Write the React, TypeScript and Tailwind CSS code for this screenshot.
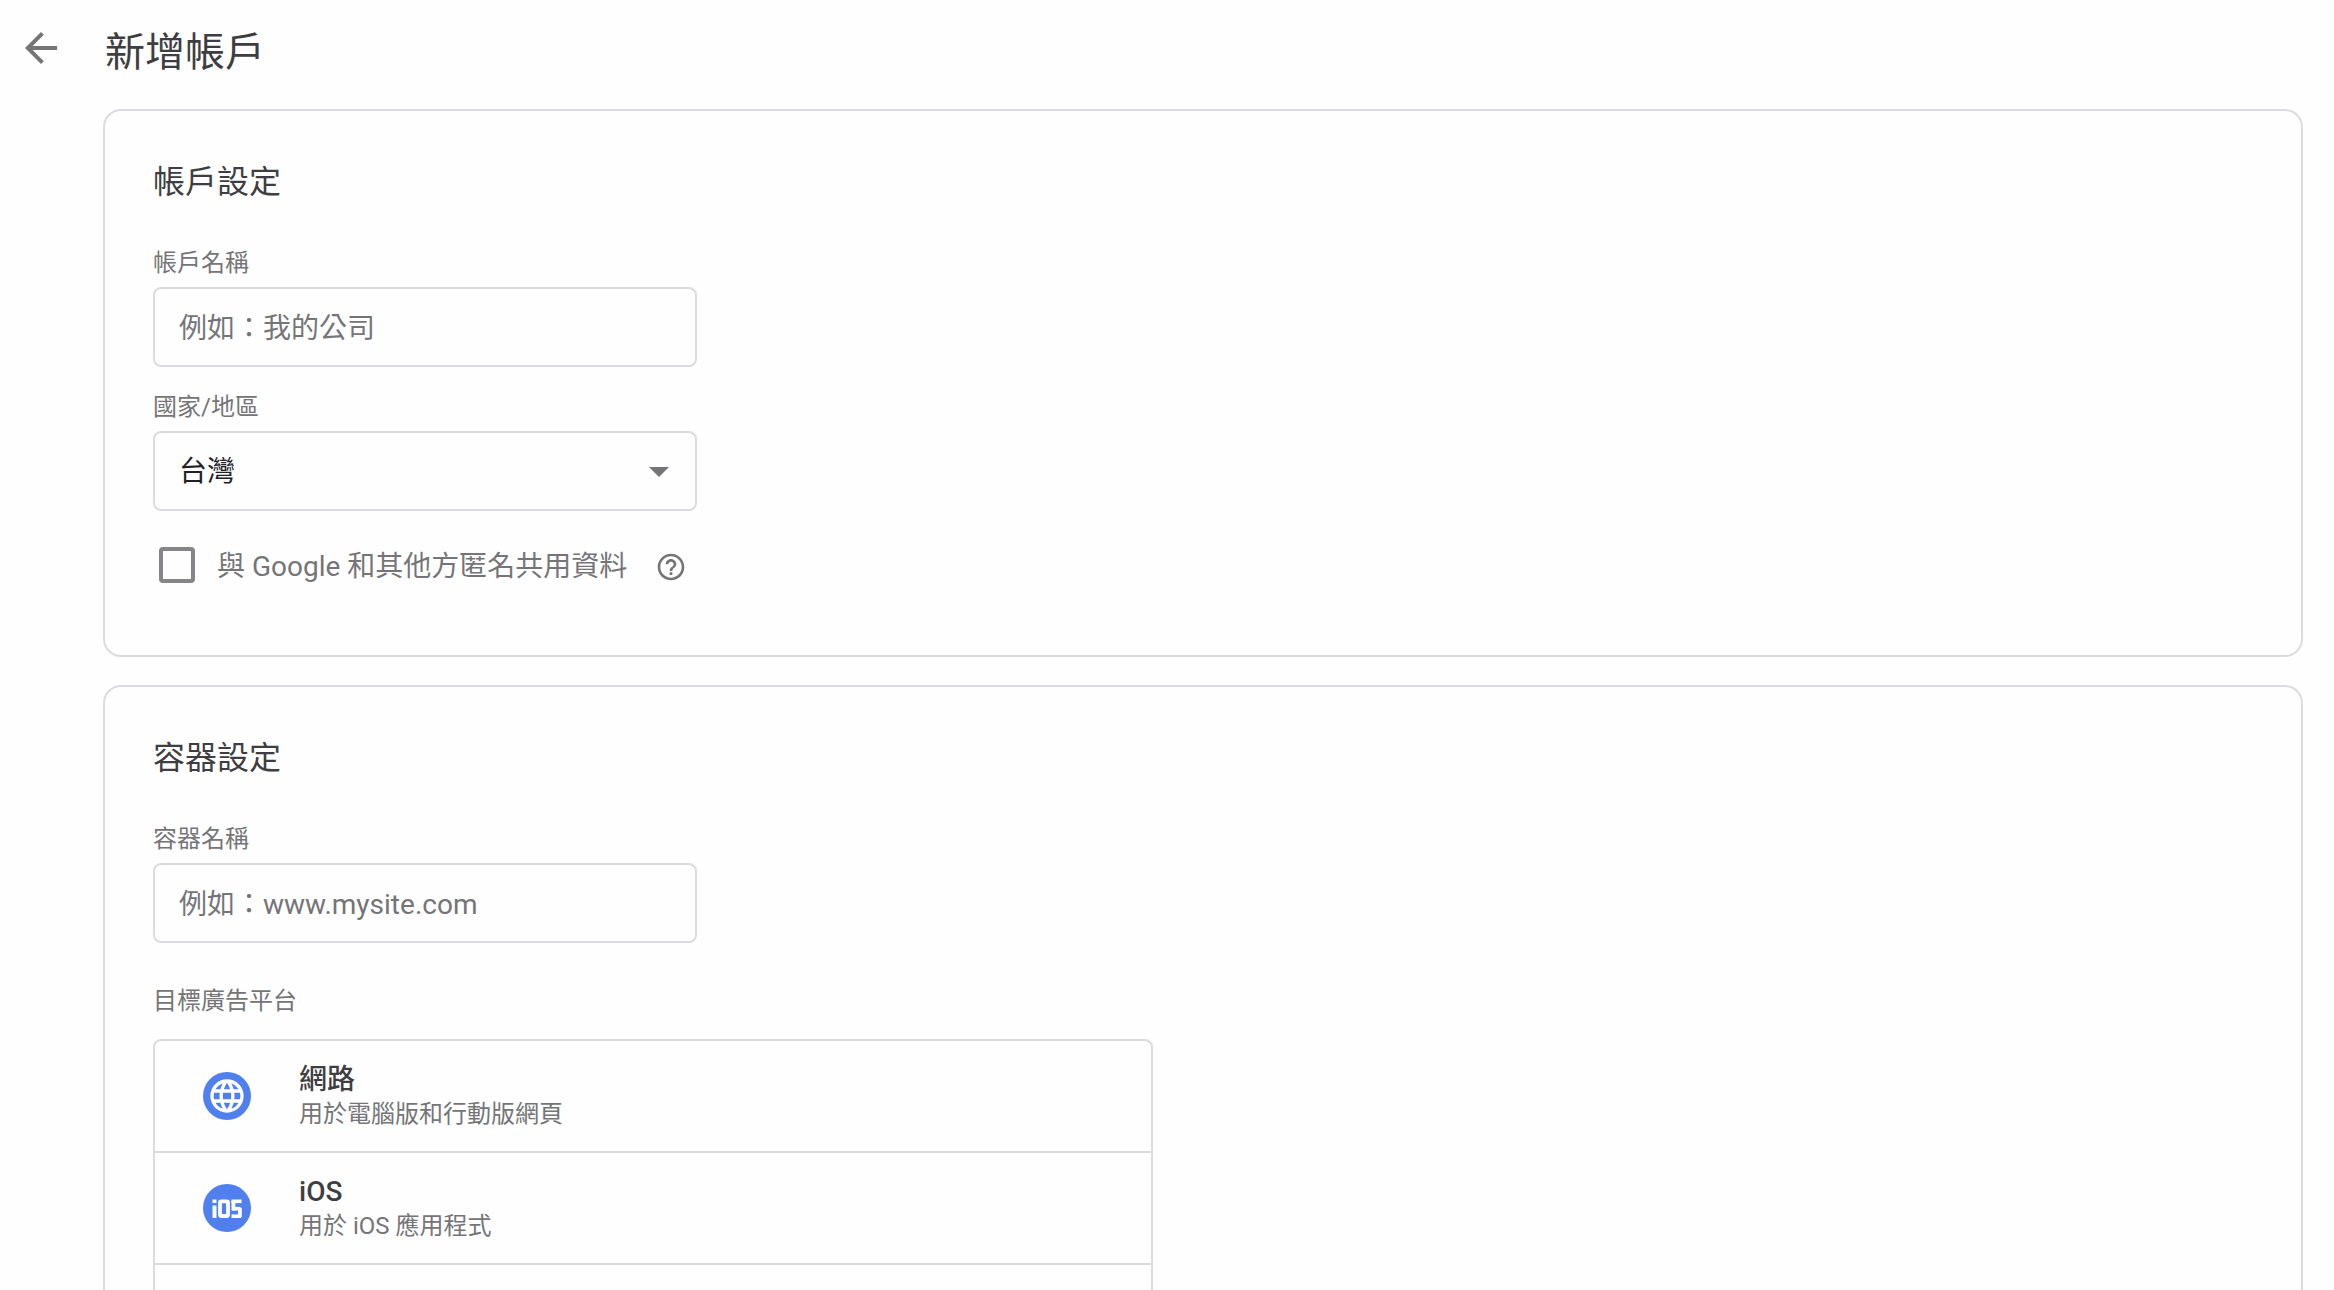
import { useState } from 'react';
import type { ReactNode } from 'react';
import { MdArrowBack, MdArrowDropDown, MdHelpOutline, MdLanguage } from 'react-icons/md';

interface Platform {
  id: string;
  name: string;
  description: string;
  icon: ReactNode;
}

function IosLogo() {
  return (
    <svg viewBox="0 0 48 48" className="w-12 h-12" fill="#fff" aria-hidden="true">
      <rect x="9.5" y="15.5" width="4" height="3.5" />
      <rect x="9.5" y="21.5" width="4" height="12.5" />
      <rect x="17" y="17.4" width="8" height="14.6" rx="1.2" fill="none" stroke="#fff" strokeWidth="3.8" />
      <rect x="28.5" y="15.5" width="10" height="3.6" />
      <rect x="28.5" y="16.5" width="3.8" height="10" />
      <rect x="29.5" y="22.9" width="8" height="3.6" />
      <rect x="35" y="23.9" width="3.8" height="9" />
      <rect x="28.5" y="30.4" width="9.5" height="3.6" />
    </svg>
  );
}

const platforms: Platform[] = [
  {
    id: 'web',
    name: '網路',
    description: '用於電腦版和行動版網頁',
    icon: <MdLanguage className="w-10 h-10 text-white" />,
  },
  {
    id: 'ios',
    name: 'iOS',
    description: '用於 iOS 應用程式',
    icon: <IosLogo />,
  },
];

function Card({ title, children }: { title: string; children: ReactNode }) {
  return (
    <section className="border-2 border-[#dcdce0] rounded-[18px] px-12 pt-12 pb-[68px]">
      <h2 className="text-[32px] leading-[46px] text-[#3e3e42]">{title}</h2>
      {children}
    </section>
  );
}

interface TextFieldProps {
  id: string;
  label: string;
  placeholder: string;
}

function TextField({ id, label, placeholder }: TextFieldProps) {
  return (
    <div className="mt-[42px] w-[544px]">
      <label htmlFor={id} className="block text-2xl leading-8 text-[#757578]">
        {label}
      </label>
      <input
        id={id}
        type="text"
        placeholder={placeholder}
        className="block mt-2 w-full h-20 px-6 pt-0.5 border-2 border-[#dcdce0] rounded-lg text-[28px] text-[#202124] placeholder:text-[#757578] outline-none"
      />
    </div>
  );
}

export default function App() {
  const [country, setCountry] = useState('tw');
  const [shareData, setShareData] = useState(false);
  const [, setPlatform] = useState<string | null>(null);

  return (
    <div
      lang="zh-Hant"
      className="h-screen overflow-hidden bg-[#fefefe] font-['Roboto','Noto_Sans_CJK_TC',sans-serif]"
    >
      <header className="flex items-start px-4 pt-6 h-[109px]">
        <button type="button" aria-label="返回" className="w-[50px] h-12 flex items-center justify-center text-[#757575]">
          <MdArrowBack className="w-12 h-12" />
        </button>
        <h1 className="ml-[39px] text-[40px] leading-[58px] text-[#3e3e42]">新增帳戶</h1>
      </header>

      <main className="ml-[103px] mr-[31px] space-y-7">
        <Card title="帳戶設定">
          <TextField id="account-name" label="帳戶名稱" placeholder="例如：我的公司" />

          <div className="mt-6 w-[544px]">
            <label htmlFor="country" className="block text-2xl leading-8 text-[#757578]">
              國家/地區
            </label>
            <div className="relative mt-2">
              <select
                id="country"
                value={country}
                onChange={(e) => setCountry(e.target.value)}
                className="block appearance-none w-full h-20 px-6 pt-0.5 border-2 border-[#dcdce0] rounded-lg text-[28px] text-[#202124] outline-none"
              >
                <option value="tw">台灣</option>
              </select>
              <MdArrowDropDown className="absolute right-3.5 top-4 w-12 h-12 text-[#757578] pointer-events-none" />
            </div>
          </div>

          <div className="mt-8 ml-1.5 h-11 flex items-center">
            <input
              id="share-data"
              type="checkbox"
              checked={shareData}
              onChange={(e) => setShareData(e.target.checked)}
              className="appearance-none w-9 h-9 border-4 border-[#858589] rounded-sm checked:bg-[#4f80ee]"
            />
            <label htmlFor="share-data" className="ml-[22px] pt-1 text-[28px] leading-9 text-[#757578]">
              與 Google 和其他方匿名共用資料
            </label>
            <button type="button" aria-label="說明" className="ml-7 pt-1 text-[#757578]">
              <MdHelpOutline className="w-8 h-8" />
            </button>
          </div>
        </Card>

        <Card title="容器設定">
          <TextField id="container-name" label="容器名稱" placeholder="例如：www.mysite.com" />

          <h3 className="mt-[42px] text-2xl leading-8 text-[#757578]">目標廣告平台</h3>
          <ul className="mt-[22px] max-w-[1000px] border-2 border-[#dcdce0] rounded-lg divide-y-2 divide-[#dcdce0]">
            {platforms.map((p) => (
              <li key={p.id}>
                <button
                  type="button"
                  onClick={() => setPlatform(p.id)}
                  className="w-full h-[110px] px-12 flex items-center text-left"
                >
                  <span className="w-12 h-12 rounded-full bg-[#4f80ee] flex items-center justify-center">
                    {p.icon}
                  </span>
                  <span className="ml-12">
                    <span className="block text-[28px] leading-9 font-medium text-[#3e3e42]">{p.name}</span>
                    <span className="block text-2xl leading-8 text-[#757578]">{p.description}</span>
                  </span>
                </button>
              </li>
            ))}
            <li className="h-[110px]" />
          </ul>
        </Card>
      </main>
    </div>
  );
}
